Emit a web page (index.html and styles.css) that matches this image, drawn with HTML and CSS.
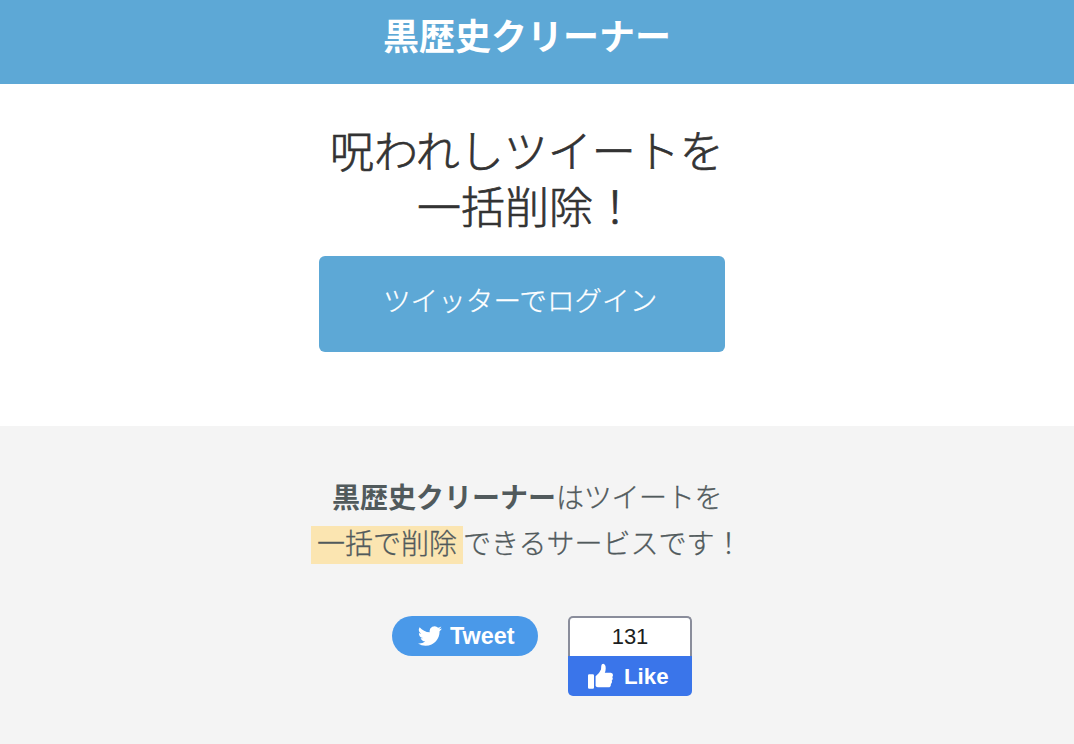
FILE: index.html
```html
<!DOCTYPE html>
<html lang="ja">
<head>
<meta charset="utf-8">
<title>黒歴史クリーナー</title>
<link rel="stylesheet" href="styles.css">
</head>
<body>
<header class="header"><span>黒歴史クリーナー</span></header>
<main class="hero">
<h1 class="hero-title"><span class="line1">呪われしツイートを</span><span class="line2">一括削除！</span></h1>
<a class="login"><span>ツイッターでログイン</span></a>
</main>
<section class="about">
<p class="desc desc-first"><b>黒歴史クリーナー</b><span>はツイートを</span></p>
<p class="desc desc-second"><mark>一括で削除</mark><span>できるサービスです！</span></p>
<div class="social">
<a class="tweet"><svg class="bird" viewBox="0 0 24 24"><path fill="#fff" d="M23.95 4.57a10 10 0 0 1-2.82.77 4.96 4.96 0 0 0 2.16-2.72c-.95.55-2 .95-3.13 1.18a4.92 4.92 0 0 0-8.38 4.48C7.69 8.1 4.07 6.13 1.64 3.16a4.92 4.92 0 0 0 1.52 6.57 4.9 4.9 0 0 1-2.23-.61v.06a4.92 4.92 0 0 0 3.95 4.83 5 5 0 0 1-2.21.08 4.94 4.94 0 0 0 4.6 3.42A9.87 9.87 0 0 1 0 19.54a13.99 13.99 0 0 0 7.56 2.21c9.05 0 14-7.5 14-13.98 0-.21 0-.42-.02-.63a9.94 9.94 0 0 0 2.41-2.57z"/></svg><span>Tweet</span></a>
<div class="fb"><div class="count">131</div><a class="like"><svg class="thumb" viewBox="0 0 26 26"><path fill="#fff" d="M2.200 11.200h3.600q1.200 0 1.200 1.200v12.200q0 1.200-1.200 1.200H2.200Q1 25.800 1 24.600V12.400q0-1.200 1.200-1.200zM8.600 23V13.200Q13 9.500 14 6.500L14.300 2.800Q14.600.8 16.200.8q2.600.6 2.500 4.600 0 2-.9 4.400h6q2.200.4 2.200 2.200 0 1.400-.8 2 .8 1 .5 2.100-.3 1.100-1 1.500.5 1 .2 2-.3 1-1 1.300.2 3.400-2.700 3.400H11q-1.400 0-2.400-1.300z"/></svg><span>Like</span></a></div>
</div>
</section>
</body>
</html>
```
FILE: styles.css
```css
* { box-sizing: border-box; }
body { margin: 0; background: #f4f4f4; font-family: "Liberation Sans", "Noto Sans CJK JP", sans-serif; }
.header { height: 84px; background: #5da8d6; color: #fff; font: bold 36px/68px "Noto Sans CJK JP", sans-serif; padding-left: 383px; }
.hero { height: 342px; background: #fff; padding-top: 41px; }
.hero-title { margin: 0; font: 300 44px/56px "Liberation Sans", "Noto Sans CJK JP", sans-serif; color: #333; -webkit-text-stroke: .7px #333; }
.line1, .line2 { display: block; }
.line1 { padding-left: 330px; }
.line2 { padding-left: 417px; }
.login { display: block; width: 406px; height: 96px; margin: 19px 0 0 319px; padding-left: 64px; border-radius: 6px; background: #5da8d6; color: #fff; font: 300 27.6px/87px "Noto Sans CJK JP", sans-serif; -webkit-text-stroke: .3px #fff; }
.about { height: 318px; padding-top: 47px; }
.desc { margin: 0; display: flex; height: 46px; font: 300 28px/46px "Noto Sans CJK JP", sans-serif; color: #515a5c; -webkit-text-stroke: .3px #515a5c; }
.desc b { font-weight: 700; -webkit-text-stroke: 0; }
.desc-first { padding-left: 332px; }
.desc-first span { letter-spacing: -.3px; }
.desc-second { padding-left: 311px; }
mark { width: 152px; height: 38px; padding-left: 6px; line-height: 32px; margin-top: 7px; background: #fbe5b1; color: inherit; }
.social { display: flex; align-items: flex-start; gap: 30px; padding: 51px 0 0 392px; }
.tweet { display: flex; align-items: center; width: 146px; height: 40px; padding-left: 26px; gap: 8px; border-radius: 20px; background: #4a99e9; color: #fff; font-size: 23.4px; font-weight: bold; }
.bird { width: 24px; height: 24px; }
.fb { width: 124px; }
.count { height: 40px; border: 2px solid #8a8d9b; border-bottom: 0; border-radius: 5px 5px 0 0; background: #fff; text-align: center; font-size: 22px; line-height: 38px; color: #1c1e21; }
.like { display: flex; align-items: center; gap: 11px; height: 40px; padding: 1px 0 0 19px; border-radius: 0 0 5px 5px; background: #3a75ea; color: #fff; font-size: 22.3px; font-weight: bold; }
.thumb { width: 26px; height: 26px; margin-top: -2px; }
```
